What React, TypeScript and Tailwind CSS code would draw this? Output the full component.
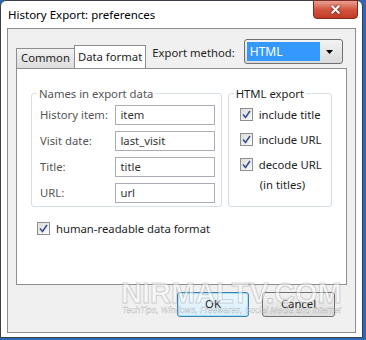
import { X } from "lucide-react";

const FONT = { fontFamily: '"Noto Sans", "Open Sans", sans-serif' };

function CheckBox({ label, sub }: { label: string; sub?: string }) {
  return (
    <div className="flex items-start gap-[6px] whitespace-nowrap">
      <span className="mt-[2px] w-[13px] h-[13px] border border-[#8f8f8f] bg-gradient-to-br from-[#dcdcdc] to-[#fbfbfb] flex items-center justify-center shrink-0">
        <svg width="9" height="9" viewBox="0 0 9 9">
          <path d="M1 4.5 L3.5 7.5 L8 1" fill="none" stroke="#3b4f8c" strokeWidth="1.6" />
        </svg>
      </span>
      <div className="leading-[17px]">
        <div>{label}</div>
        {sub && <div className="pl-[1px] pt-[3px]">{sub}</div>}
      </div>
    </div>
  );
}

const FIELDS: [string, string][] = [
  ["History item:", "item"],
  ["Visit date:", "last_visit"],
  ["Title:", "title"],
  ["URL:", "url"],
];

export default function App() {
  return (
    <div className="w-[366px] h-[340px] bg-[#2a69b5] relative overflow-hidden text-[11.3px] text-[#1e1e1e] whitespace-nowrap" style={FONT}>
      <div className="w-[363px] h-[338px] bg-white border border-[#3a3f47] rounded-tl-[6px] rounded-tr-[6px] flex flex-col relative">
        {/* title bar */}
        <div className="h-[27px] flex items-center pl-[7px] pt-[1px] text-[11.5px] text-black">
          History Export: preferences
        </div>
        <div className="absolute right-[4px] top-[-1px] w-[45px] h-[19px] rounded-b-[4px] border border-[#7a2b22] bg-gradient-to-b from-[#e8a093] via-[#d2553f] to-[#c23a22] flex items-center justify-center">
          <X size={13} strokeWidth={3.5} className="text-white drop-shadow-[0_0_1px_#5a1d14]" />
        </div>

        {/* client area */}
        <div className="flex-1 mx-[6px] mb-[4px] bg-[#f0f0f0] border border-[#8d8d8d] flex flex-col px-[8px]">
          {/* tab header */}
          <div className="flex items-end h-[39px]">
            <div className="h-[20px] px-[4px] border border-[#8c8e94] border-b-0 bg-gradient-to-b from-[#f2f2f2] to-[#dcdcdc] flex items-center">
              Common
            </div>
            <div className="h-[23px] px-[3px] border border-[#8c8e94] border-b-0 bg-white flex items-center -ml-[1px]">
              Data format
            </div>
            <div className="ml-[6px] mb-[6px]">Export method:</div>
            <div className="ml-[9px] mb-[4px] w-[99px] h-[25px] border border-[#707070] rounded-[3px] bg-gradient-to-b from-[#f3f3f3] to-[#dadada] flex items-center p-[2px]">
              <div className="flex-1 h-full bg-[#3399ff] text-white flex items-center pl-[3px] text-[12px]">HTML</div>
              <svg width="20" height="8" viewBox="0 0 20 8">
                <path d="M6 2 L13 2 L9.5 6 Z" fill="#000" />
              </svg>
            </div>
          </div>

          {/* tab panel */}
          <div className="w-[331px] h-[217px] bg-white border border-[#8c8e94] pt-[18px] px-[14px] flex flex-col">
            <div className="flex gap-[6px]">
              <fieldset className="min-w-0 w-[192px] h-[120px] border border-[#d5dfe5] rounded-[3px] pl-[8px] pr-[6px]">
                <legend className="px-[2px] ml-[-3px] text-[#555] leading-[13px]">Names in export data</legend>
                <div className="flex flex-col gap-[6px] mt-[5px] text-[#555]">
                  {FIELDS.map(([k, v]) => (
                    <div key={k} className="flex items-center">
                      <span className="w-[76px]">{k}</span>
                      <div className="w-[100px] h-[20px] border border-[#abadb3] bg-white pl-[4px] flex items-center text-[#333]">
                        {v}
                      </div>
                    </div>
                  ))}
                </div>
              </fieldset>
              <fieldset className="min-w-0 w-[105px] h-[120px] border border-[#d5dfe5] rounded-[3px] pl-[11px]">
                <legend className="px-[2px] ml-[-6px] leading-[13px]">HTML export</legend>
                <div className="flex flex-col gap-[8px] mt-[6px]">
                  <CheckBox label="include title" />
                  <CheckBox label="include URL" />
                  <CheckBox label="decode URL" sub="(in titles)" />
                </div>
              </fieldset>
            </div>
            <div className="mt-[13px] ml-[6px]">
              <CheckBox label="human-readable data format" />
            </div>
          </div>

          {/* buttons */}
          <div className="flex justify-end gap-[13px] mt-[7px] pr-[12px]">
            <button className="w-[72px] h-[25px] rounded-[3px] border border-[#3c7fb1] bg-gradient-to-b from-[#eaf6fd] to-[#d9f0fc] shadow-[inset_0_0_0_1px_#a7e2f7]">
              OK
            </button>
            <button className="w-[73px] h-[25px] rounded-[3px] border border-[#707070] bg-gradient-to-b from-[#f2f2f2] to-[#dddddd]">
              Cancel
            </button>
          </div>
        </div>
      </div>
      {/* watermark */}
      <div className="absolute left-[121px] top-[276px] text-[29px] leading-[34px] font-bold text-white/50 [-webkit-text-stroke:1px_rgba(110,110,110,0.3)] pointer-events-none" style={{ fontFamily: '"Liberation Sans", sans-serif' }}>
        NIRMALTV.COM
      </div>
      <div className="absolute left-[122px] top-[304px] text-[8.5px] leading-[12px] italic text-white/60 [-webkit-text-stroke:0.4px_rgba(110,110,110,0.4)] pointer-events-none" style={{ fontFamily: '"Liberation Sans", sans-serif' }}>
        TechTips, Windows, Freewares, Social Media and Internet
      </div>
    </div>
  );
}
